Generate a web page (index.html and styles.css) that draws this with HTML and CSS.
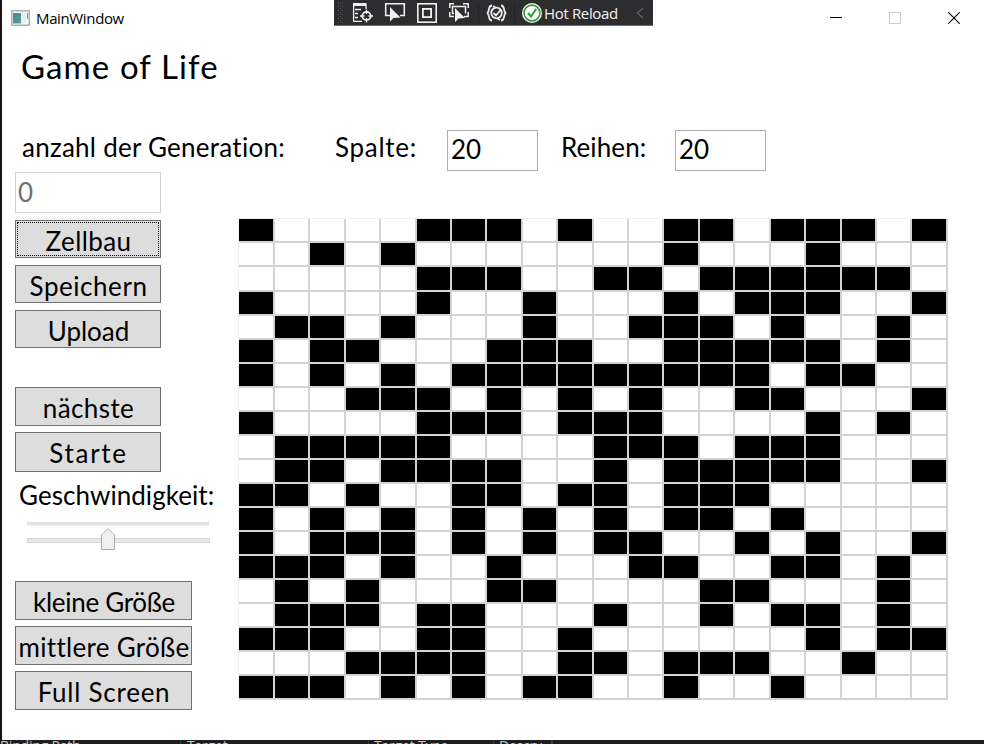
FILE: index.html
```
<!DOCTYPE html>
<html lang="de">
<head>
<meta charset="utf-8">
<title>MainWindow</title>
<link rel="stylesheet" href="styles.css">
</head>
<body>
<div class="desktop">
  <div class="window">
    <header class="titlebar">
      <svg class="app-icon" width="19" height="16" viewBox="0 0 19 16">
        <defs><linearGradient id="pane" x1="0" y1="0" x2="1" y2="1"><stop offset="0" stop-color="#4a7fb0"/><stop offset="1" stop-color="#55a878"/></linearGradient></defs>
        <rect x=".75" y=".75" width="17.5" height="14.5" fill="#f7f8f8" stroke="#abb0b8" stroke-width="1.5"/>
        <rect x="2" y="3" width="8" height="10.500" fill="url(#pane)"/>
        <rect x="11" y="3" width="4" height="10" fill="#e6eceb"/>
        <rect x="16" y="3" width="1" height="6" fill="#5fa58d"/>
      </svg>
      <span class="caption">MainWindow</span>
      <div class="window-buttons">
        <svg width="12" height="12" viewBox="0 0 12 12"><path d="M0 5.5H12" stroke="#000"/></svg>
        <svg width="12" height="12" viewBox="0 0 12 12"><rect x=".5" y=".5" width="11" height="11" fill="none" stroke="#ccc"/></svg>
        <svg width="12" height="12" viewBox="0 0 12 12"><path d="M.3 .3L11.700 11.700M11.700 .3L.3 11.700" stroke="#000" stroke-width="1.100"/></svg>
      </div>
    </header>

    <h1 class="title">Game of Life</h1>

    <div class="settings">
      <span class="label generation">anzahl der Generation:</span>
      <span class="label columns">Spalte:</span>
      <div class="field">20</div>
      <span class="label rows">Reihen:</span>
      <div class="field">20</div>
    </div>

    <div class="content">
      <aside class="sidebar">
        <div class="field counter">0</div>
        <div class="group">
          <button class="btn focused t-zellbau">Zellbau</button>
          <button class="btn t-speichern">Speichern</button>
          <button class="btn">Upload</button>
        </div>
        <div class="group steps">
          <button class="btn tall t-next">nächste</button>
          <button class="btn taller t-start">Starte</button>
        </div>
        <div class="label speed">Geschwindigkeit:</div>
        <svg class="slider" width="184" height="30" viewBox="0 0 184 30">
          <path d="M0 1H.8V2H181.200V1H182V5.500H0Z" fill="#e3e3e3"/>
          <rect x=".5" y="18.500" width="182" height="4" fill="#e7eaea" stroke="#d6d6d6"/>
          <path d="M74.500 29.500V15L81 8.500L87.500 15V29.500Z" fill="#f0f0f0" stroke="#acacac"/>
        </svg>
        <div class="group sizes">
          <button class="btn tall t-small">kleine Größe</button>
          <button class="btn tall t-medium">mittlere Größe</button>
          <button class="btn tall t-full">Full Screen</button>
        </div>
      </aside>
      <div class="board" id="board"></div>
    </div>

    <div class="debugbar">
      <svg width="319" height="27" viewBox="0 0 319 27">
        <rect width="319" height="26" fill="#2d2d30"/>
        <path d="M0 25.500H319" stroke="#707072"/>
        <g fill="#56565a">
          <path d="M4 2h1v1h-1zM8 2h1v1h-1zM6 4h1v1h-1zM4 6h1v1h-1zM8 6h1v1h-1zM6 8h1v1h-1zM4 10h1v1h-1zM8 10h1v1h-1zM6 12h1v1h-1zM4 14h1v1h-1zM8 14h1v1h-1zM6 16h1v1h-1zM4 18h1v1h-1zM8 18h1v1h-1zM6 20h1v1h-1zM4 22h1v1h-1zM8 22h1v1h-1z"/>
        </g>
        <g fill="none" stroke="#f0f0f0" stroke-width="1.300">
          <path d="M19 4.500H32.500" stroke-width="3"/>
          <path d="M19.600 5V21.400H28M32 5V9M21 9.500H27M21 13.500H24M21 17.500H24"/>
          <circle cx="32.500" cy="16" r="4.200" stroke-width="1.800"/>
          <path d="M32.500 9.500V14M32.500 18V22.500M26 16H30.500M34.500 16H39"/>
          <path d="M57 15.500H51.700V3.700H70.300V15.500H66" stroke-width="1.600"/>
          <rect x="83.800" y="3.800" width="18.400" height="18.400" stroke-width="1.600"/>
          <rect x="88.900" y="8.900" width="8.200" height="8.200" stroke-width="1.800"/>
          <path d="M115.800 8V3.700H120M129 3.700H134.200V8M134.200 12V16.500H130M120 16.500H115.800V12M120 13.500H118.500V6.500H131.500V13.500" stroke-width="1.500"/>
        </g>
        <path d="M56 7V21.500L59.500 18L66.500 17.500Z" fill="#f0f0f0"/>
        <path d="M121 8V22L124.500 18.500L131 18Z" fill="#f0f0f0"/>
        <path d="M144.500 4V22M180.500 4V22" stroke="#222224"/>
        <g fill="none" stroke="#ededed" stroke-width="1.800">
          <path d="M158 5.500C154 5.500 156 10 153.500 13C156 16 154 20.500 158 20.500M167 5.500C171 5.500 169 10 171.500 13C169 16 171 20.500 167 20.500"/>
          <circle cx="162.500" cy="13" r="5.300"/>
          <path d="M159.500 13L162 15.500L166.500 10"/>
          <path d="M159 6L162 8M166 20L163 18"/>
        </g>
        <circle cx="198" cy="13" r="10" fill="#f5f5f5"/>
        <circle cx="198" cy="13" r="7.900" fill="#fff" stroke="#339a3c" stroke-width="1.600"/>
        <path d="M194 13L197 16.500L202.300 8.800" fill="none" stroke="#339a3c" stroke-width="2"/>
        <path d="M309 8L303.500 13L309 18" fill="none" stroke="#626265" stroke-width="1.300"/>
      </svg>
      <span class="hot-reload">Hot Reload</span>
    </div>
  </div>

  <footer class="output">
    <span class="col-path">Binding Path</span>
    <span class="col-target">Target</span>
    <span class="col-type">Target Type</span>
    <span class="col-desc">Descry</span>
    <span class="col-rest"></span>
  </footer>
</div>
<script src="board.js"></script>
</body>
</html>
```
FILE: board.js
```
// One string per row; "#" is a living cell.
const rows = [
  "#....###.#..##.###.#",
  "..#.#.......#...#...",
  ".....###..##.######.",
  "#....#..#...#.###..#",
  ".##.#...#..###.#..#.",
  "#.##...###..#####.#.",
  "#.#.#.#########.##..",
  "...###.#.#.#..##...#",
  "#....###.###....#.#.",
  ".#####....###.###...",
  ".##.####..#.#####..#",
  "##.#..##.##.###.....",
  "#.#.#.#.#.#.##.#....",
  "#.###.#.#.##..#.#..#",
  "###.#..#...##..##.#.",
  ".#.#...##....##...#.",
  ".###.##...#..#.##.#.",
  "###..##..#......#.##",
  "...####..##.###..#..",
  "###.#.#.##..#..#...."
];

const board = document.getElementById("board");
for (const row of rows) {
  for (const cell of row) {
    const el = document.createElement("div");
    el.className = cell === "#" ? "cell alive" : "cell";
    board.appendChild(el);
  }
}
```
FILE: styles.css
```
* { box-sizing: border-box; }

body {
  margin: 0;
  background: #fff;
  color: #000;
  font-family: "Comic Sans MS", Lato, "Open Sans", sans-serif;
  font-size: 26px;
}

.desktop {
  width: 984px;
  height: 744px;
  overflow: hidden;
  display: grid;
  grid-template-rows: 740px 4px;
}

.window {
  position: relative;
  border-left: 2px solid #151518;
  background: #fff;
  white-space: nowrap;
}

.titlebar {
  display: flex;
  align-items: center;
  height: 36px;
  padding: 0 24px 0 9px;
}

.caption {
  margin-left: 6px;
  font: 15px/20px "Open Sans", sans-serif;
  letter-spacing: -0.36px;
}

.window-buttons {
  display: flex;
  gap: 47px;
  margin-left: auto;
}

.window-buttons svg { display: block; }

.title {
  margin: 0;
  padding-left: 19px;
  font-size: 33px;
  font-weight: 400;
  line-height: 60px;
  letter-spacing: 1.1px;
  height: 94px;
}

.settings {
  display: flex;
  height: 42px;
  padding-left: 20px;
}

.label { line-height: 35px; }
.generation { width: 313px; letter-spacing: 0.25px; }
.columns { width: 112px; letter-spacing: 0.7px; }
.rows { width: 114px; letter-spacing: 0.1px; }
.settings .field + .label { margin-left: 23px; width: 114px; }

.field {
  width: 91px;
  height: 41px;
  padding-left: 3px;
  border: 1px solid #abadb3;
  line-height: 36px;
}

.content {
  display: flex;
  align-items: flex-start;
  padding-left: 13px;
}

.sidebar {
  width: 224px;
  display: flex;
  flex-direction: column;
  align-items: flex-start;
}

.counter {
  width: 146px;
  padding-left: 2px;
  border-color: #cfd0d3;
  color: #707070;
  line-height: 38px;
}

.group {
  display: flex;
  flex-direction: column;
  gap: 7px;
  width: 146px;
  margin-top: 7px;
}

.group.steps { gap: 6px; margin-top: 39px; }
.group.sizes { gap: 6px; width: 177px; margin-top: 31px; }

.btn {
  height: 38px;
  padding: 0 0 0 1px;
  border: 1px solid #707070;
  border-radius: 0;
  background: #ddd;
  color: #000;
  font: inherit;
  line-height: 40px;
  text-align: center;
  white-space: nowrap;
  display: flex;
  justify-content: center;
  align-items: flex-start;
}

.btn.tall { height: 39px; }
.btn.taller { height: 40px; }

.focused {
  outline: 1px dotted #000;
  outline-offset: -3px;
}

.t-zellbau { letter-spacing: 0.4px; }
.t-speichern { letter-spacing: 0.55px; }
.t-next { letter-spacing: 0.4px; }
.t-start { letter-spacing: 1.7px; }
.t-small { letter-spacing: -0.3px; }
.t-medium { letter-spacing: 0.3px; }
.t-full { letter-spacing: 0.75px; }

.speed {
  margin: 6px 0 0 4px;
  letter-spacing: 0.05px;
  line-height: 34px;
  height: 42px;
}

.slider { display: block; margin-left: 12px; }

.board {
  display: grid;
  grid-template-columns: repeat(20, 35.43px);
  grid-template-rows: repeat(20, 24.06px);
  margin: 47.4px 0 0 0.4px;
  box-shadow: -1px -1px 0 #f0f0f0;
}

.cell {
  border-right: 2px solid #d3d3d3;
  border-bottom: 2px solid #d3d3d3;
}

.alive { background: #000 padding-box; }

.debugbar {
  position: absolute;
  top: 0;
  left: 332px;
  width: 319px;
  height: 27px;
}

.debugbar svg { display: block; }

.hot-reload {
  position: absolute;
  left: 210px;
  top: 3px;
  color: #f1f1f1;
  font: 15px/20px "Open Sans", sans-serif;
  letter-spacing: -0.35px;
}

.output {
  display: flex;
  background: #1c1e1f;
  color: #c8c8c8;
  overflow: hidden;
  font: 14px/12px "Open Sans", sans-serif;
  letter-spacing: -0.2px;
  white-space: nowrap;
}

.output span { height: 14px; border-right: 1px solid #3a3a3d; }
.col-path { width: 181px; }
.col-target { width: 188px; padding-left: 6px; }
.col-type { width: 125px; padding-left: 5px; }
.col-desc { width: 58px; padding-left: 5px; }
```
